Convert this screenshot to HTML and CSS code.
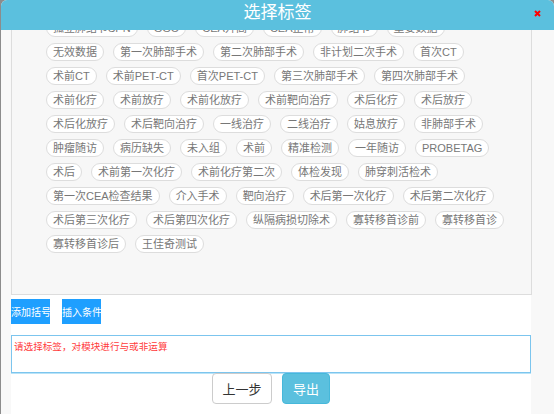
FILE: index.html
```html
<!DOCTYPE html>
<html lang="zh-CN">
<head>
  <meta charset="UTF-8" />
  <meta name="viewport" content="width=device-width, initial-scale=1.0"/>
  <title>选择标签</title>
  <link rel="stylesheet" href="styles.css">
</head>
<body>
  <div class="modal">
    <div class="modal-header">
      <h2 class="modal-title">选择标签</h2>
      <span class="modal-close">
        <svg width="7" height="7" viewBox="0 0 7 7"><path d="M1 1L6 6M6 1L1 6" stroke="#f00" stroke-width="2" fill="none"/></svg>
      </span>
    </div>
    <div class="modal-body">
      <div class="tag-box">
        <span class="tag">肺癌</span>
        <span class="tag">肺腺癌</span>
        <span class="tag">肺鳞癌</span>
        <span class="tag">小细胞肺癌</span>
        <span class="tag">大细胞肺癌</span>
        <span class="tag">良性结节</span>
        <span class="tag">炎性结节</span>
        <span class="tag">混合磨玻璃结节</span>
        <span class="tag">纯磨玻璃结节</span>
        <span class="tag">实性结节</span>
        <span class="tag">多发结节</span>
        <span class="tag">脑转移</span>
        <span class="tag">骨转移</span>
        <span class="tag">肾上腺转移</span>
        <span class="tag">淋巴结转移</span>
        <span class="tag">EGFR突变</span>
        <span class="tag">ALK融合</span>
        <span class="tag">ROS1融合</span>
        <span class="tag">家族史</span>
        <span class="tag">非手术患者</span>
        <span class="tag">早期肺癌</span>
        <span class="tag">晚期肺癌</span>
        <span class="tag">手术患者</span>
        <span class="tag">临床试验</span>
        <span class="tag">肝转移</span>
        <span class="tag">孤立肺结节SPN</span>
        <span class="tag">GGO</span>
        <span class="tag">CEA升高</span>
        <span class="tag">CEA正常</span>
        <span class="tag">肺结节</span>
        <span class="tag">重要数据</span>
        <span class="tag">无效数据</span>
        <span class="tag">第一次肺部手术</span>
        <span class="tag">第二次肺部手术</span>
        <span class="tag">非计划二次手术</span>
        <span class="tag">首次CT</span>
        <span class="tag">术前CT</span>
        <span class="tag">术前PET-CT</span>
        <span class="tag">首次PET-CT</span>
        <span class="tag">第三次肺部手术</span>
        <span class="tag">第四次肺部手术</span>
        <span class="tag">术前化疗</span>
        <span class="tag">术前放疗</span>
        <span class="tag">术前化放疗</span>
        <span class="tag">术前靶向治疗</span>
        <span class="tag">术后化疗</span>
        <span class="tag">术后放疗</span>
        <span class="tag">术后化放疗</span>
        <span class="tag">术后靶向治疗</span>
        <span class="tag">一线治疗</span>
        <span class="tag">二线治疗</span>
        <span class="tag">姑息放疗</span>
        <span class="tag">非肺部手术</span>
        <span class="tag">肿瘤随访</span>
        <span class="tag">病历缺失</span>
        <span class="tag">未入组</span>
        <span class="tag">术前</span>
        <span class="tag">精准检测</span>
        <span class="tag">一年随访</span>
        <span class="tag">PROBETAG</span>
        <span class="tag">术后</span>
        <span class="tag">术前第一次化疗</span>
        <span class="tag">术前化疗第二次</span>
        <span class="tag">体检发现</span>
        <span class="tag">肺穿刺活检术</span>
        <span class="tag">第一次CEA检查结果</span>
        <span class="tag">介入手术</span>
        <span class="tag">靶向治疗</span>
        <span class="tag">术后第一次化疗</span>
        <span class="tag">术后第二次化疗</span>
        <span class="tag">术后第三次化疗</span>
        <span class="tag">术后第四次化疗</span>
        <span class="tag">纵隔病损切除术</span>
        <span class="tag">寡转移首诊前</span>
        <span class="tag">寡转移首诊</span>
        <span class="tag">寡转移首诊后</span>
        <span class="tag">王佳奇测试</span>
      </div>
      <div class="panel">
        <div class="tools">
          <button class="tool-btn">添加括号</button>
          <button class="tool-btn">插入条件</button>
        </div>
        <div class="expr">请选择标签，对模块进行与或非运算</div>
        <div class="footer">
          <button class="btn btn-default">上一步</button>
          <button class="btn btn-info">导出</button>
        </div>
      </div>
    </div>
  </div>
  <script src="script.js"></script>
</body>
</html>
```

FILE: styles.css
```css
* {
  box-sizing: border-box;
}
html, body {
  margin: 0;
  height: 100%;
}
body {
  font-family: "Liberation Sans", "Noto Sans CJK SC", sans-serif;
  background-color: #8c8c8c;
  overflow: hidden;
}
.modal {
  margin-left: 1px;
  height: 414px;
  background: #f8f8f8;
  border-radius: 6px 6px 0 0;
  overflow: hidden;
  display: flex;
  flex-direction: column;
}
.modal-header {
  position: relative;
  flex: none;
  height: 30px;
  background: #5bc0de;
}
.modal-title {
  margin: 0;
  text-align: center;
  color: #fff;
  font-size: 17px;
  font-weight: normal;
  line-height: 26px;
}
.modal-close {
  position: absolute;
  right: 13px;
  top: 10px;
  width: 7px;
  height: 7px;
  line-height: 0;
  cursor: pointer;
}
.modal-body {
  flex: 1;
  overflow-y: scroll;
  margin-right: 1px;
  padding: 10px 0 0 10px;
}
.modal-body::-webkit-scrollbar {
  width: 10px;
}
.modal-body::-webkit-scrollbar-track {
  background: #f1f1f1;
}
.modal-body::-webkit-scrollbar-thumb {
  background: #c1c1c1;
}
.tag-box {
  width: 521px;
  padding: 14px 25px 41px 34px;
  border: 1px solid #ddd;
  background: #f7f7f7;
  display: flex;
  flex-wrap: wrap;
  gap: 6px 9px;
}
.tag {
  height: 18px;
  line-height: 16px;
  padding: 0 6px;
  border: 1px solid #ddd;
  border-radius: 9px;
  background: #fff;
  color: #777;
  font-size: 11px;
  white-space: nowrap;
}
.panel {
  width: 520px;
  background: #fff;
  padding: 4px 0 10px;
}
.tools {
  display: flex;
  gap: 12px;
}
.tool-btn {
  width: 39px;
  height: 25px;
  padding: 0;
  border: none;
  background: #1e9fff;
  color: #fff;
  font-family: inherit;
  font-size: 10px;
  white-space: nowrap;
  overflow: visible;
}
.expr {
  margin-top: 11px;
  height: 38px;
  padding: 3px 2px;
  border: 1px solid #7cc5ee;
  box-shadow: 0 1px 0 #b9e3f7;
  color: #ff3b3b;
  font-size: 9.6px;
}
.footer {
  display: flex;
  justify-content: center;
  gap: 10px;
}
.btn {
  height: 31px;
  padding: 0;
  border-radius: 4px;
  font-family: inherit;
  font-size: 13px;
  cursor: pointer;
}
.btn-default {
  width: 60px;
  background: #fff;
  border: 1px solid #ccc;
  color: #333;
}
.btn-info {
  width: 48px;
  background: #5bc0de;
  border: 1px solid #46b8da;
  color: #fff;
}
```

FILE: script.js
```js
var body = document.querySelector('.modal-body');
body.scrollTop = body.scrollHeight;
```
